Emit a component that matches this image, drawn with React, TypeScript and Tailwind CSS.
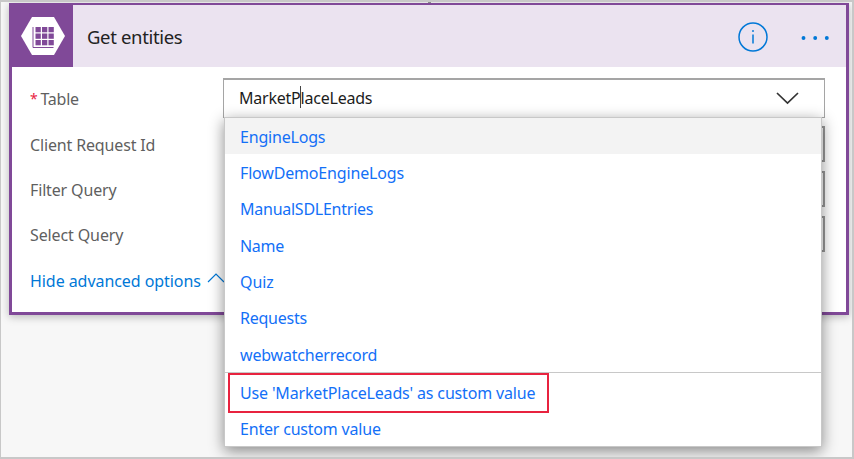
const options = [
  { label: "EngineLogs", style: "bg-[#f3f3f3] tracking-[-0.2px]" },
  { label: "FlowDemoEngineLogs", style: "tracking-[-0.17px]" },
  { label: "ManualSDLEntries", style: "tracking-[-0.25px]" },
  { label: "Name", style: "tracking-[-0.3px]" },
  { label: "Quiz", style: "tracking-[-0.1px]" },
  { label: "Requests", style: "tracking-[-0.25px]" },
  { label: "webwatcherrecord", style: "tracking-[-0.2px]" },
];

function EntityIcon() {
  return (
    <svg className="block h-[62px] w-16" viewBox="0 0 64 62">
      <path d="M12 31 23 12h22l11 19-11 19H23z" fill="#fff" />
      <path d="M24 22v20.500h20.500" fill="none" stroke="#804998" strokeWidth="1" />
      <g fill="#804998">
        {[22, 28.5, 35].map((y) =>
          [26.500, 33, 39.500].map((x) => <rect key={`${x}-${y}`} x={x} y={y} width="5.300" height="5.300" />)
        )}
      </g>
    </svg>
  );
}

function Header() {
  return (
    <header className="flex h-[62px] items-center bg-[#ebe3f0]">
      <div className="-ml-[3px] h-[62px] w-16 bg-[#804998]">
        <EntityIcon />
      </div>
      <h1 className="ml-[14px] flex-1 pt-[2px] text-[18.500px] leading-6 tracking-[-0.35px] text-[#222]">Get entities</h1>
      <svg className="mt-[2px] h-8 w-8" viewBox="0 0 32 32" fill="none" stroke="#0078d7" strokeWidth="1.500">
        <circle cx="16" cy="16" r="14" />
        <path d="M16 13.500v9" />
        <circle cx="16" cy="10" r="0.950" fill="#0078d7" stroke="none" />
      </svg>
      <svg className="mt-px mr-[13px] ml-8 h-6 w-8" viewBox="0 0 32 24" fill="#0078d7">
        <circle cx="2.500" cy="13" r="1.950" />
        <circle cx="14.200" cy="13" r="1.950" />
        <circle cx="25.800" cy="13" r="1.950" />
      </svg>
    </header>
  );
}

function EmptyField({ label, style }: { label: string; style: string }) {
  return (
    <label className={`flex h-9 items-center ${style}`}>
      <span className="w-[194px] pt-0.5">{label}</span>
      <span className="h-9 w-[601px] border-2 border-[#999]" />
    </label>
  );
}

function Dropdown() {
  return (
    <div className="absolute top-[115px] left-[223px] flex h-[330px] w-[598px] flex-col border border-[#c8c8c8] bg-white text-[#1370f7] shadow-[0_4px_14px_rgba(0,0,0,0.45)]">
      {options.map((option, index) => (
        <div key={option.label} className={`flex shrink-0 items-center pl-[15px] ${index === 0 ? "h-9 pt-px" : "h-[36.300px] pt-[2px]"} ${option.style}`}>
          {option.label}
        </div>
      ))}
      <div className="flex h-[75px] flex-col border-t border-[#c8c8c8]">
        <div className="ml-[3px] flex h-10 w-[321px] shrink-0 items-center border-2 border-[#e8233f] pl-[10px] tracking-[-0.16px]">
          Use 'MarketPlaceLeads' as custom value
        </div>
        <div className="flex h-[32px] items-center pl-[15px] tracking-[-0.2px]">Enter custom value</div>
      </div>
    </div>
  );
}

export default function App() {
  return (
    <main className="relative h-[459px] w-[854px] overflow-hidden border border-t-2 border-r-2 border-b-2 border-[#c8c8c8] bg-[#f7f7f7] pt-px pl-2 font-['Noto_Sans',sans-serif] text-[16px] leading-5">
      <section className="h-[312px] w-[840px] border-[3px] border-t-2 border-[#804998] bg-white shadow-[0_2px_8px_rgba(0,0,0,0.25)]">
        <Header />
        <form className="pl-[18px] text-[#5f5f5f]">
          <label className="mt-[11px] flex h-10 items-center">
            <span className="flex w-[193px] gap-[3px] pt-0.5 tracking-[-0.25px]"><span className="text-[14px] text-[#e8233f]">*</span>Table</span>
            <span className="flex h-10 w-[602px] items-center justify-between border border-t-2 border-[#a5a5a5] pr-[25px] pl-[15px] text-[#1c1c1c]">
              <span className="relative -mt-0.5 tracking-[-0.22px]">
                MarketPlaceLeads
                <span className="absolute top-[-2px] left-[61px] h-[22px] w-px bg-[#444]" />
              </span>
              <svg className="-mt-px h-3.5 w-[23px]" viewBox="0 0 23 14" fill="none" stroke="#333" strokeWidth="1.700"><path d="m1 2 10.500 10L22 2" /></svg>
            </span>
          </label>
          <EmptyField label="Client Request Id" style="mt-[8px] tracking-[-0.15px]" />
          <EmptyField label="Filter Query" style="mt-[9px] tracking-[-0.15px]" />
          <EmptyField label="Select Query" style="mt-[9px] tracking-[-0.12px]" />
          <div className="mt-[19px] flex items-center text-[#0078d7]">
            <span className="w-[177px] tracking-[-0.06px]">Hide advanced options</span>
            <svg className="-mt-1 h-3 w-[18px]" viewBox="0 0 18 12" fill="none" stroke="#0078d7" strokeWidth="1.200"><path d="m1 9 8-8 8 8" /></svg>
          </div>
        </form>
      </section>
      <Dropdown />
      <span className="absolute top-[-2px] left-[427px] h-[3px] w-[3px] bg-[#888]" />
    </main>
  );
}
